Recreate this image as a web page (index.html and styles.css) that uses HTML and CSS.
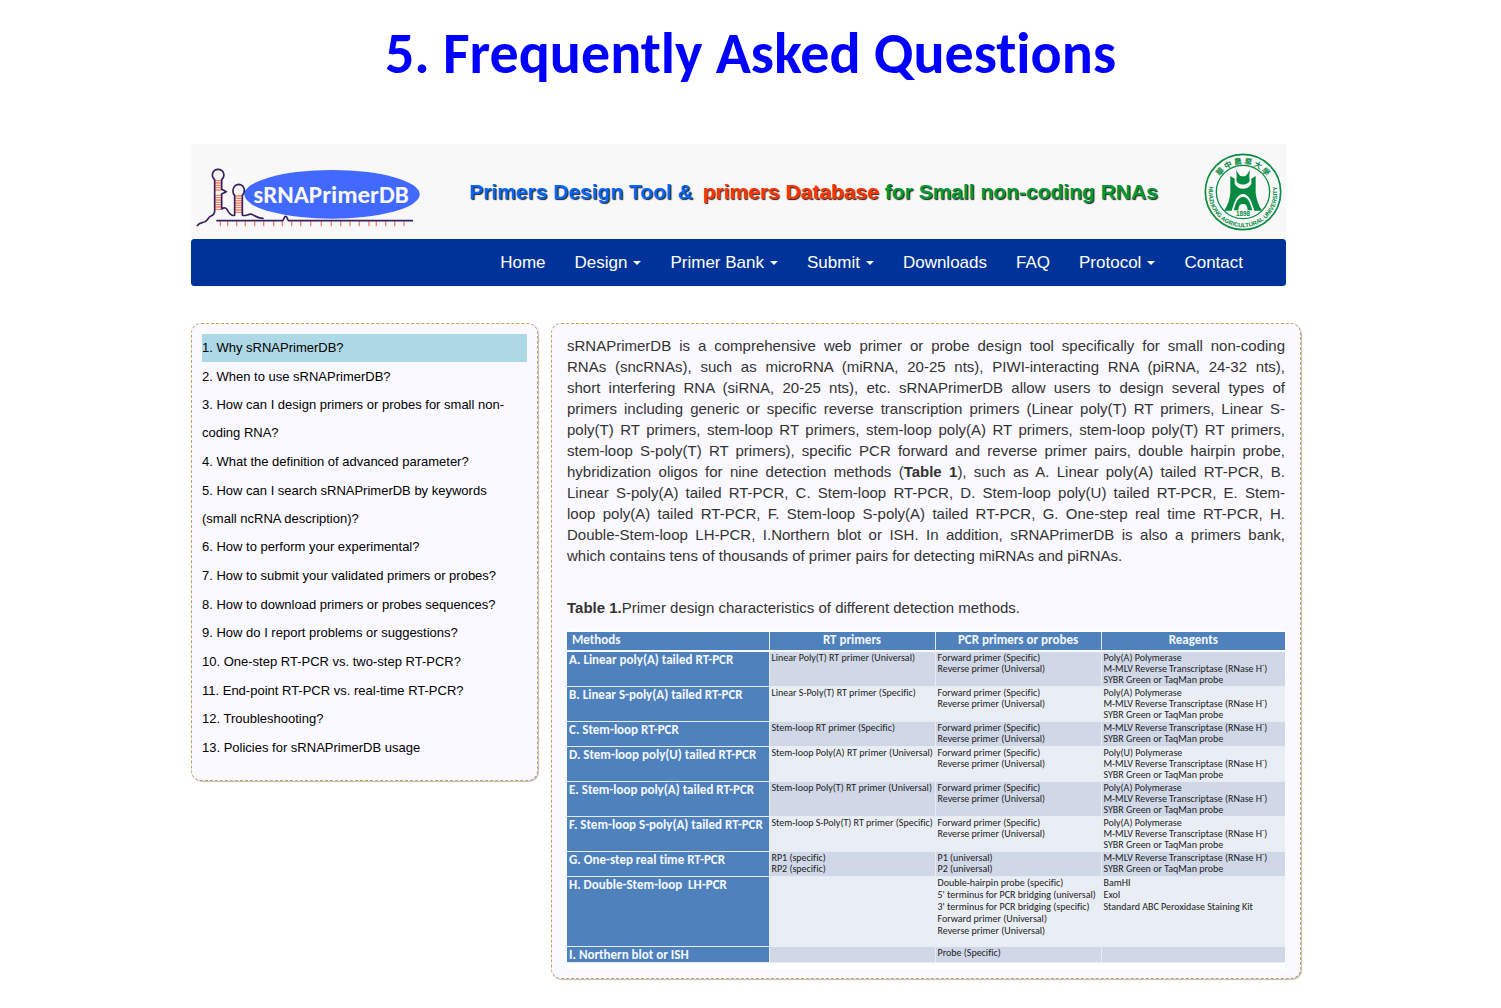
FILE: index.html
```html
<!DOCTYPE html>
<html lang="en">
<head>
<meta charset="utf-8">
<title>sRNAPrimerDB - FAQ</title>
<link rel="stylesheet" href="styles.css">
</head>
<body>
<h1 class="page-title">5. Frequently Asked Questions</h1>
<div class="site">
  <header class="masthead">
    <svg class="logo" viewBox="18 12 735 285" role="img" aria-label="sRNAPrimerDB">
      <ellipse cx="441" cy="163" rx="263" ry="73" fill="#4169ff"/>
      <text class="logo-text" x="438" y="190" text-anchor="middle">sRNAPrimerDB</text>
      <g stroke="#ff7f5c" stroke-width="4" fill="none">
        <path d="M90 122h20M90 129h20M90 136h20M90 143h20M90 150h20M90 166h20M90 173h20M90 180h20M90 187h20M90 194h20M90 201h20M90 208h20"/>
        <path d="M150 168h22M150 175h22M150 182h22M150 189h22M150 196h22M150 203h22M150 210h22M150 217h22"/>
        <path d="M106 244v15M128 244v15M155 244v15M181 244v15M209 244v15M236 244v15M266 244v15M292 244v15M320 244v15M347 244v15M377 244v15M409 244v15M439 244v15M467 244v15M495 244v15M523 244v15M552 244v15M574 244v15M602 244v15M629 244v15M657 244v15"/>
      </g>
      <g stroke="#35205f" stroke-width="5" fill="none" stroke-linejoin="round" stroke-linecap="round">
        <path d="M37 257C44 245 52 250 60 245C69 240 70 231 78 228C85 225 89 221 89 213V119C77 109 82 88 99 88C117 88 122 109 110 119V148L124 155L110 162V207C118 200 125 204 128 212C134 222 140 229 149 226V167C140 157 143 134 161 133C180 134 182 156 172 166V225C181 231 190 220 201 223C215 232 219 234 234 235"/>
        <path d="M96 242H293C297 240 296 229 302 229C308 229 306 239 311 242H682"/>
      </g>
    </svg>
    <p class="tagline"><span class="tag-blue">Primers Design Tool &amp;</span> <span class="tag-red">primers Database</span> <span class="tag-green">for Small non-coding RNAs</span></p>
    <svg class="emblem" viewBox="68 38 240 240" role="img" aria-label="Huazhong Agricultural University">
      <defs>
        <path id="ring-top" d="M104 158a84 84 0 0 1 168 0"/>
        <path id="ring-bottom" d="M88 136a103 103 0 1 0 200 0"/>
      </defs>
      <g fill="none" stroke="#078a42">
        <circle cx="188" cy="158" r="113" stroke-width="5"/>
        <circle cx="188" cy="158" r="80" stroke-width="4"/>
      </g>
      <g fill="#078a42">
        <path d="M167 91C175 103 176 111 188 111C200 111 201 103 209 91C207 105 206 112 208 121C208 140 168 140 168 121C170 112 169 105 167 91Z"/>
        <path d="M150 110L163 118V134C170 145 178 148 188 148C198 148 206 145 213 134V118L226 110V160C228 181 235 199 245 214H222C214 188 206 164 188 164C170 164 162 188 154 214H131C143 197 148 180 150 160Z"/>
        <path d="M160 213C166 193 171 174 188 172C205 174 210 193 216 213H202C201 199 197 194 188 194C179 194 175 199 174 213Z"/>
        <text class="emblem-year" x="188" y="230" text-anchor="middle">1898</text>
        <text class="emblem-han"><textPath href="#ring-top" startOffset="50%" text-anchor="middle">華 中 農 業 大 學</textPath></text>
        <text class="emblem-ring"><textPath href="#ring-bottom" startOffset="50%" text-anchor="middle">HUAZHONG AGRICULTURAL UNIVERSITY</textPath></text>
      </g>
    </svg>
  </header>
  <nav class="navbar">
    <a href="#">Home</a>
    <a href="#" class="has-menu">Design</a>
    <a href="#" class="has-menu">Primer Bank</a>
    <a href="#" class="has-menu">Submit</a>
    <a href="#">Downloads</a>
    <a href="#">FAQ</a>
    <a href="#" class="has-menu">Protocol</a>
    <a href="#">Contact</a>
  </nav>
  <div class="columns">
    <aside class="panel questions">
      <ul>
        <li class="current"><a href="#">1. Why sRNAPrimerDB?</a></li>
        <li><a href="#">2. When to use sRNAPrimerDB?</a></li>
        <li><a href="#">3. How can I design primers or probes for small non-coding RNA?</a></li>
        <li><a href="#">4. What the definition of advanced parameter?</a></li>
        <li><a href="#">5. How can I search sRNAPrimerDB by keywords (small ncRNA description)?</a></li>
        <li><a href="#">6. How to perform your experimental?</a></li>
        <li><a href="#">7. How to submit your validated primers or probes?</a></li>
        <li><a href="#">8. How to download primers or probes sequences?</a></li>
        <li><a href="#">9. How do I report problems or suggestions?</a></li>
        <li><a href="#">10. One-step RT-PCR vs. two-step RT-PCR?</a></li>
        <li><a href="#">11. End-point RT-PCR vs. real-time RT-PCR?</a></li>
        <li><a href="#">12. Troubleshooting?</a></li>
        <li><a href="#">13. Policies for sRNAPrimerDB usage</a></li>
      </ul>
    </aside>
    <main class="panel answer">
      <p class="intro">sRNAPrimerDB is a comprehensive web primer or probe design tool specifically for small non-coding<br>
        RNAs (sncRNAs), such as microRNA (miRNA, 20-25 nts), PIWI-interacting RNA (piRNA, 24-32 nts),<br>
        short interfering RNA (siRNA, 20-25 nts), etc. sRNAPrimerDB allow users to design several types of<br>
        primers including generic or specific reverse transcription primers (Linear poly(T) RT primers, Linear S-<br>
        poly(T) RT primers, stem-loop RT primers, stem-loop poly(A) RT primers, stem-loop poly(T) RT primers,<br>
        stem-loop S-poly(T) RT primers), specific PCR forward and reverse primer pairs, double hairpin probe,<br>
        hybridization oligos for nine detection methods (<b>Table 1</b>), such as A. Linear poly(A) tailed RT-PCR, B.<br>
        Linear S-poly(A) tailed RT-PCR, C. Stem-loop RT-PCR, D. Stem-loop poly(U) tailed RT-PCR, E. Stem-<br>
        loop poly(A) tailed RT-PCR, F. Stem-loop S-poly(A) tailed RT-PCR, G. One-step real time RT-PCR, H.<br>
        Double-Stem-loop LH-PCR, I.Northern blot or ISH. In addition, sRNAPrimerDB is also a primers bank,
        <span class="last-line">which contains tens of thousands of primer pairs for detecting miRNAs and piRNAs.</span></p>
      <p class="caption" id="table-caption"><b>Table 1.</b>Primer design characteristics of different detection methods.</p>
      <div class="sheet">
        <table class="methods" aria-labelledby="table-caption">
          <colgroup><col class="col-method"><col class="col-primer"><col class="col-primer"><col></colgroup>
          <thead>
            <tr><th scope="col">Methods</th><th scope="col">RT primers</th><th scope="col">PCR primers or probes</th><th scope="col">Reagents</th></tr>
          </thead>
          <tbody>
            <tr class="tall"><th scope="row">A. Linear poly(A) tailed RT-PCR</th><td>Linear Poly(T) RT primer (Universal)</td><td>Forward primer (Specific)<br>Reverse primer (Universal)</td><td>Poly(A) Polymerase<br>M-MLV Reverse Transcriptase (RNase H<sup>-</sup>)<br>SYBR Green or TaqMan probe</td></tr>
            <tr class="tall"><th scope="row">B. Linear S-poly(A) tailed RT-PCR</th><td>Linear S-Poly(T) RT primer (Specific)</td><td>Forward primer (Specific)<br>Reverse primer (Universal)</td><td>Poly(A) Polymerase<br>M-MLV Reverse Transcriptase (RNase H<sup>-</sup>)<br>SYBR Green or TaqMan probe</td></tr>
            <tr class="mid"><th scope="row">C. Stem-loop RT-PCR</th><td>Stem-loop RT primer (Specific)</td><td>Forward primer (Specific)<br>Reverse primer (Universal)</td><td>M-MLV Reverse Transcriptase (RNase H<sup>-</sup>)<br>SYBR Green or TaqMan probe</td></tr>
            <tr class="tall"><th scope="row">D. Stem-loop poly(U) tailed RT-PCR</th><td>Stem-loop Poly(A) RT primer (Universal)</td><td>Forward primer (Specific)<br>Reverse primer (Universal)</td><td>Poly(U) Polymerase<br>M-MLV Reverse Transcriptase (RNase H<sup>-</sup>)<br>SYBR Green or TaqMan probe</td></tr>
            <tr class="tall"><th scope="row">E. Stem-loop poly(A) tailed RT-PCR</th><td>Stem-loop Poly(T) RT primer (Universal)</td><td>Forward primer (Specific)<br>Reverse primer (Universal)</td><td>Poly(A) Polymerase<br>M-MLV Reverse Transcriptase (RNase H<sup>-</sup>)<br>SYBR Green or TaqMan probe</td></tr>
            <tr class="tall"><th scope="row">F. Stem-loop S-poly(A) tailed RT-PCR</th><td>Stem-loop S-Poly(T) RT primer (Specific)</td><td>Forward primer (Specific)<br>Reverse primer (Universal)</td><td>Poly(A) Polymerase<br>M-MLV Reverse Transcriptase (RNase H<sup>-</sup>)<br>SYBR Green or TaqMan probe</td></tr>
            <tr class="mid"><th scope="row">G. One-step real time RT-PCR</th><td>RP1 (specific)<br>RP2 (specific)</td><td>P1 (universal)<br>P2 (universal)</td><td>M-MLV Reverse Transcriptase (RNase H<sup>-</sup>)<br>SYBR Green or TaqMan probe</td></tr>
            <tr class="giant"><th scope="row">H. Double-Stem-loop&nbsp; LH-PCR</th><td></td><td>Double-hairpin probe (specific)<br>5' terminus for PCR bridging (universal)<br>3' terminus for PCR bridging (specific)<br>Forward primer (Universal)<br>Reverse primer (Universal)</td><td>BamHI<br>ExoI<br>Standard ABC Peroxidase Staining Kit</td></tr>
            <tr class="short"><th scope="row">I. Northern blot or ISH</th><td></td><td>Probe (Specific)</td><td></td></tr>
          </tbody>
        </table>
      </div>
    </main>
  </div>
</div>
</body>
</html>
```
FILE: styles.css
```css
* { box-sizing: border-box; }
body {
  margin: 0;
  background: #fff;
  color: #333;
  font-family: "Liberation Sans", Arial, sans-serif;
}
.page-title {
  margin: 0;
  padding: 22px 0 58px;
  text-align: center;
  color: #00f;
  font: bold 58px/64px Carlito, Lato, sans-serif;
  font-variant-ligatures: none;
}
.site { margin: 0 200px 28px 191px; }

/* Header */
.masthead {
  display: flex;
  align-items: center;
  margin-right: 15px;
  padding-right: 3px;
  background: #f8f8f8;
}
.logo { width: 245px; height: 95px; flex: none; }
.logo-text {
  font: bold 75px Carlito, Lato, sans-serif;
  fill: #f8f8f8;
}
.tagline {
  flex: 1;
  margin: 0;
  padding-right: 12px;
  text-align: center;
  white-space: nowrap;
  font-size: 21px;
  line-height: 28px;
  font-weight: bold;
  text-shadow: 1px 1px 1px #222;
}
.tag-blue { color: #06f; margin-right: 4px; }
.tag-red { color: #f30; }
.tag-green { color: #093; }
.emblem { width: 80px; height: 80px; flex: none; }
.emblem-year { font: bold 19px "Liberation Sans", sans-serif; }
.emblem-han { font: bold 23px "Noto Sans CJK TC", sans-serif; }
.emblem-ring { font: bold 18px "Liberation Sans", sans-serif; }

/* Navigation */
.navbar {
  display: flex;
  justify-content: flex-end;
  gap: 29px;
  margin-right: 15px;
  padding: 0 42px;
  border: 1px solid #039;
  border-radius: 3px;
  background: #039;
}
.navbar a {
  color: #fff;
  font-size: 17px;
  line-height: 45px;
  text-decoration: none;
}
.has-menu::after {
  content: "";
  display: inline-block;
  margin-left: 6px;
  vertical-align: 3px;
  border: 4px solid transparent;
  border-top-color: #fff;
  border-bottom: 0;
}

/* Panels */
.columns {
  display: grid;
  grid-template-columns: 347fr 750fr;
  gap: 13px;
  align-items: start;
  margin-top: 37px;
}
.panel {
  border: 1px dashed #c1a35a;
  border-radius: 10px;
  background: #faf9ff;
  box-shadow: 1px 1px 1px #bbb;
}
.questions { padding: 10px 10px 18px; }
.questions ul {
  display: flex;
  flex-direction: column;
  justify-content: space-between;
  min-height: 428px;
  margin: 0;
  padding: 0;
  list-style: none;
}
.questions li { padding-right: 6px; font-size: 13px; line-height: 28px; }
.questions a { color: #000; text-decoration: none; }
.current { background: #add8e6; }
.answer { padding: 11px 15px 9px; }
.intro {
  margin: 0 0 31px;
  font-size: 15px;
  line-height: 21px;
  text-align: justify;
  text-align-last: justify;
}
.last-line { display: block; text-align-last: left; }
.caption { margin: 0 0 12px; font-size: 15px; line-height: 21px; }

/* Methods table */
.sheet { padding: 2px 0 6px; background: #fff; }
.methods {
  width: 100%;
  table-layout: fixed;
  border-collapse: collapse;
  color: #222;
  font: 10px/11px Carlito, Lato, sans-serif;
  font-variant-ligatures: none;
}
.col-method { width: 202px; }
.col-primer { width: 166px; }
.methods th, .methods td {
  padding: 0 2px;
  border: 1px solid #e6ecf6;
  border-width: 0 0 1px 1px;
  vertical-align: top;
  text-align: left;
  white-space: nowrap;
}
.methods th { background: #4f81bd; color: #f4f8ff; font-size: 13px; line-height: 15px; }
.methods tr > :first-child { border-left: 0; }
.methods thead th { height: 19px; border-bottom: 2px solid #f8faff; text-align: center; }
.methods thead th:first-child { padding-left: 5px; text-align: left; }
.methods tbody tr:nth-child(odd) { background: #d0d8e8; }
.methods tbody tr:nth-child(even) { background: #e9edf4; }
.methods sup { font-size: 7px; line-height: 0; }
.tall { height: 35px; }
.mid { height: 25px; }
.giant { height: 70px; line-height: 12px; }
.short { height: 15px; }
```
